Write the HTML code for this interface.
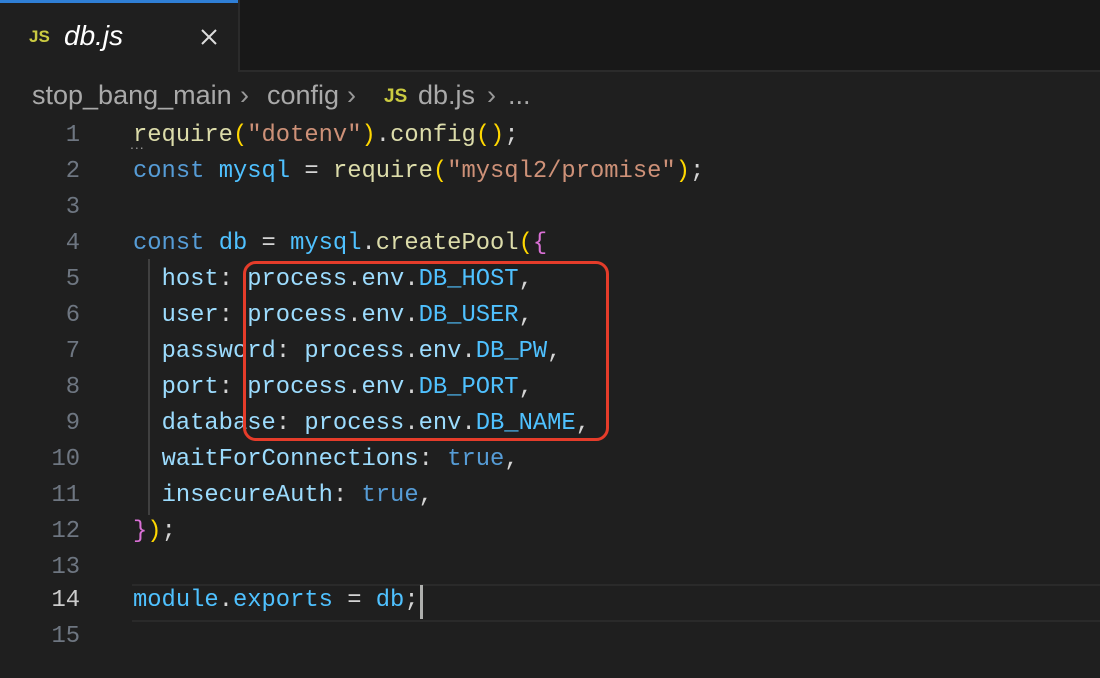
<!DOCTYPE html>
<html><head><style>
body{margin:0;width:1100px;height:678px;background:#1f1f1f;overflow:hidden;position:relative;font-family:"Liberation Sans",sans-serif}
.tabr{position:absolute;left:238px;top:0;width:862px;height:70px;background:#181818;border-left:2px solid #2b2b2b;border-bottom:2px solid #2b2b2b;box-sizing:content-box}
.blue{position:absolute;left:0;top:0;width:238px;height:3px;background:#2f7fd6}
.js{color:#cbcb41;font-weight:bold;font-size:17px;position:absolute}
.code{position:absolute;left:0;top:3px;font-family:"Liberation Mono",monospace;font-size:23.8px;white-space:pre}
.ln{position:absolute;width:80px;text-align:right;color:#6e7681;left:0}
.l{position:absolute;left:133px;color:#d4d4d4}
.k{color:#569cd6}.v{color:#9cdcfe}.f{color:#dcdcaa}.s{color:#ce9178}.y{color:#ffd700}.p{color:#da70d6}.c{color:#4fc1ff}
.bc{position:absolute;top:80px;color:#a9a9a9;font-size:27px;white-space:nowrap}
</style></head><body>
<div class="blue"></div>
<div class="tabr"></div>
<span class="js" style="left:29px;top:27px">JS</span>
<span style="position:absolute;left:64px;top:20px;color:#fff;font-style:italic;font-size:28px">db.js</span>
<svg style="position:absolute;left:200px;top:28px" width="18" height="18"><path d="M2 2L16 16M16 2L2 16" stroke="#ddd" stroke-width="2"/></svg>
<span class="bc" style="left:32px">stop_bang_main</span>
<span class="bc" style="left:240px;color:#999">›</span>
<span class="bc" style="left:267px">config</span>
<span class="bc" style="left:347px;color:#999">›</span>
<span class="js" style="left:384px;top:86px;font-size:19px">JS</span>
<span class="bc" style="left:418px">db.js</span>
<span class="bc" style="left:487px;color:#999">›</span>
<span class="bc" style="left:508px">...</span>
<div style="position:absolute;left:148px;top:259px;width:2px;height:256px;background:#404040"></div>
<div style="position:absolute;left:132px;top:584px;width:968px;height:34px;border-top:2px solid #2a2a2a;border-bottom:2px solid #2a2a2a"></div>
<div style="position:absolute;left:420px;top:585px;width:3px;height:34px;background:#aeafad"></div>
<div class="code">
<div class="ln" style="top:119px">1</div><div class="l" style="top:119px"><span class="f">require</span><span class="y">(</span><span class="s">"dotenv"</span><span class="y">)</span>.<span class="f">config</span><span class="y">()</span>;</div>
<div class="ln" style="top:155px">2</div><div class="l" style="top:155px"><span class="k">const</span> <span class="c">mysql</span> = <span class="f">require</span><span class="y">(</span><span class="s">"mysql2/promise"</span><span class="y">)</span>;</div>
<div class="ln" style="top:191px">3</div>
<div class="ln" style="top:227px">4</div><div class="l" style="top:227px"><span class="k">const</span> <span class="c">db</span> = <span class="c">mysql</span>.<span class="f">createPool</span><span class="y">(</span><span class="p">{</span></div>
<div class="ln" style="top:263px">5</div><div class="l" style="top:263px">  <span class="v">host</span>: <span class="v">process</span>.<span class="v">env</span>.<span class="c">DB_HOST</span>,</div>
<div class="ln" style="top:299px">6</div><div class="l" style="top:299px">  <span class="v">user</span>: <span class="v">process</span>.<span class="v">env</span>.<span class="c">DB_USER</span>,</div>
<div class="ln" style="top:335px">7</div><div class="l" style="top:335px">  <span class="v">password</span>: <span class="v">process</span>.<span class="v">env</span>.<span class="c">DB_PW</span>,</div>
<div class="ln" style="top:371px">8</div><div class="l" style="top:371px">  <span class="v">port</span>: <span class="v">process</span>.<span class="v">env</span>.<span class="c">DB_PORT</span>,</div>
<div class="ln" style="top:407px">9</div><div class="l" style="top:407px">  <span class="v">database</span>: <span class="v">process</span>.<span class="v">env</span>.<span class="c">DB_NAME</span>,</div>
<div class="ln" style="top:443px">10</div><div class="l" style="top:443px">  <span class="v">waitForConnections</span>: <span class="k">true</span>,</div>
<div class="ln" style="top:479px">11</div><div class="l" style="top:479px">  <span class="v">insecureAuth</span>: <span class="k">true</span>,</div>
<div class="ln" style="top:515px">12</div><div class="l" style="top:515px"><span class="p">}</span><span class="y">)</span>;</div>
<div class="ln" style="top:551px">13</div>
<div class="ln" style="top:584px;color:#ccc">14</div><div class="l" style="top:584px"><span class="c">module</span>.<span class="c">exports</span> = <span class="c">db</span>;</div>
<div class="ln" style="top:620px">15</div>
</div>
<div style="position:absolute;left:243px;top:261px;width:360px;height:174px;border:3px solid #e53c2a;border-radius:13px"></div>
<div style="position:absolute;left:130px;top:136px;color:#999;font-size:14px;letter-spacing:1px">...</div>
</body></html>
